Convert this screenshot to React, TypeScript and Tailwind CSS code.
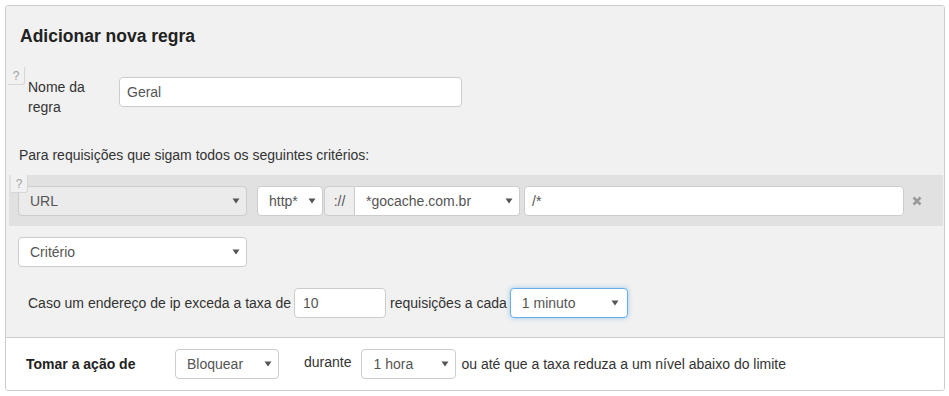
import React from 'react';

const Arrow: React.FC = () => (
  <svg width="8" height="6" viewBox="0 0 8 6" className="shrink-0">
    <path d="M0.5 0.5 L7.5 0.5 L4 5.5 Z" fill="#555" />
  </svg>
);

interface FakeSelectProps {
  value: string;
  className?: string;
}

const FakeSelect: React.FC<FakeSelectProps> = ({ value, className = '' }) => (
  <div
    className={`h-[30px] flex items-center justify-between pl-[11px] pr-[6px] border text-[14px] text-[#555] ${className}`}
  >
    <span>{value}</span>
    <Arrow />
  </div>
);

const HelpTab: React.FC<{ className?: string }> = ({ className = '' }) => (
  <div
    className={`absolute left-[2px] w-[17px] h-[18px] flex items-center justify-center text-[12px] text-[#a0a0a0] bg-[#f1f1f1] border-r border-b border-[#d6d6d6] rounded-br-[3px] ${className}`}
  >
    ?
  </div>
);

const App: React.FC = () => {
  return (
    <div
      className="min-h-screen bg-white p-[5px] text-[14px] text-[#333]"
      style={{ fontFamily: '"Liberation Sans", Arial, sans-serif' }}
    >
      <div className="w-[940px] border border-[#ccc] rounded-[3px] overflow-hidden">
        <div className="bg-[#f1f1f1] pt-[20px] pb-[19px]">
          <h3 className="pl-[14px] text-[17.5px] leading-[20px] font-bold text-[#222]">
            Adicionar nova regra
          </h3>

          <div className="relative mt-[31px] flex items-start pl-[22px]">
            <HelpTab className="-top-[10px]" />
            <label className="w-[91px] pr-[16px] leading-[20px]">Nome da regra</label>
            <div className="w-[343px] h-[30px] flex items-center px-[7px] bg-white border border-[#ccc] rounded-[4px] text-[#555]">
              Geral
            </div>
          </div>

          <p className="mt-[28px] pl-[13px] leading-[20px]">
            Para requisições que sigam todos os seguintes critérios:
          </p>

          <div className="relative mt-[10px] ml-[3px] mr-[1px] bg-[#e1e1e1] pt-[11px] pb-[10px] pl-[9px] flex items-center">
            <HelpTab className="top-0 -left-[1px]" />
            <FakeSelect value="URL" className="w-[229px] bg-[#ebebeb] border-[#ccc] rounded-[4px]" />
            <FakeSelect
              value="http*"
              className="ml-[10px] w-[66px] bg-white border-[#ccc] rounded-[4px] pl-[10px]"
            />
            <div className="ml-[1px] flex">
              <div className="w-[31px] h-[30px] flex items-center justify-center bg-[#eee] border border-[#ccc] rounded-l-[4px] text-[#555]">
                ://
              </div>
              <FakeSelect
                value="*gocache.com.br"
                className="w-[165px] bg-white border-[#ccc] border-l-0 rounded-r-[4px]"
              />
            </div>
            <div className="ml-[4px] w-[380px] h-[30px] flex items-center px-[7px] bg-white border border-[#ccc] rounded-[4px] text-[#555]">
              /*
            </div>
            <svg width="10" height="10" viewBox="0 0 10 10" className="ml-[8px]">
              <path d="M1.5 1.5 L8.5 8.5 M8.5 1.5 L1.5 8.5" stroke="#999" strokeWidth="2.6" />
            </svg>
          </div>

          <div className="mt-[11px] pl-[12px]">
            <FakeSelect value="Critério" className="w-[229px] bg-white border-[#ccc] rounded-[4px]" />
          </div>

          <div className="mt-[21px] pl-[22px] flex items-center">
            <span>Caso um endereço de ip exceda a taxa de</span>
            <div className="ml-[3px] w-[92px] h-[30px] flex items-center px-[8px] bg-white border border-[#ccc] rounded-[4px] text-[#555]">
              10
            </div>
            <span className="ml-[4px]">requisições a cada</span>
            <FakeSelect
              value="1 minuto"
              className="ml-[3px] w-[118px] bg-white border-[#66afe9] rounded-[4px] shadow-[0_0_5px_rgba(102,175,233,0.6)] pr-[8px]"
            />
          </div>
        </div>

        <div className="border-t border-[#ccc] bg-white pt-[11px] pb-[11px] pl-[20px] flex items-center">
          <span className="w-[149px] font-bold text-[#222]">Tomar a ação de</span>
          <FakeSelect value="Bloquear" className="w-[104px] bg-white border-[#ccc] rounded-[4px]" />
          <span className="ml-[25px] -mt-[3px]">durante</span>
          <FakeSelect value="1 hora" className="ml-[10px] w-[95px] bg-white border-[#ccc] rounded-[4px]" />
          <span className="ml-[5px]">ou até que a taxa reduza a um nível abaixo do limite</span>
        </div>
      </div>
    </div>
  );
};

export default App;
